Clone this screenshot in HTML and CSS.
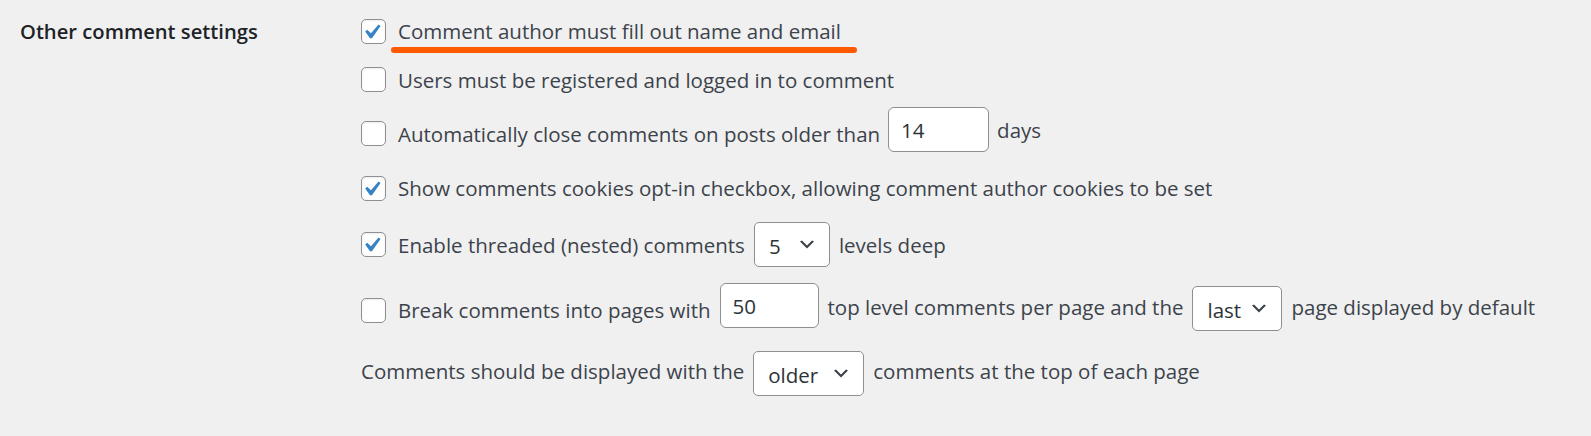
FILE: index.html
```html
<!DOCTYPE html>
<html lang="en">
<head>
<meta charset="utf-8">
<title>Discussion Settings</title>
<link rel="stylesheet" href="styles.css">
</head>
<body>
<div class="form-table">
  <div class="th">Other comment settings</div>
  <fieldset class="options">
    <div class="row r1">
      <label class="opt"><span class="cb"><svg viewBox="3.6 1.8 15.6 15.6"><path d="M14.83 4.89l1.34.94-5.81 8.38H9.02L5.78 9.67l1.34-1.25 2.57 2.4z"/></svg></span><span class="txt mark">Comment author must fill out name and email</span></label>
    </div>
    <div class="row r2">
      <label class="opt"><span class="cb"></span><span class="txt">Users must be registered and logged in to comment</span></label>
    </div>
    <div class="row r3">
      <label class="opt"><span class="cb"></span><span class="txt">Automatically close comments on posts older than</span></label>
      <span class="input w14">14</span>
      <span class="txt">days</span>
    </div>
    <div class="row r4">
      <label class="opt"><span class="cb"><svg viewBox="3.6 1.8 15.6 15.6"><path d="M14.83 4.89l1.34.94-5.81 8.38H9.02L5.78 9.67l1.34-1.25 2.57 2.4z"/></svg></span><span class="txt">Show comments cookies opt-in checkbox, allowing comment author cookies to be set</span></label>
    </div>
    <div class="row r5">
      <label class="opt"><span class="cb"><svg viewBox="3.6 1.8 15.6 15.6"><path d="M14.83 4.89l1.34.94-5.81 8.38H9.02L5.78 9.67l1.34-1.25 2.57 2.4z"/></svg></span><span class="txt">Enable threaded (nested) comments</span></label>
      <span class="select s5"><span>5</span><svg viewBox="3 5.6 14 8.8"><path d="M5 6l5 5 5-5 2 1-7 7-7-7 2-1z"/></svg></span>
      <span class="txt">levels deep</span>
    </div>
    <div class="row r6">
      <label class="opt"><span class="cb"></span><span class="txt">Break comments into pages with</span></label>
      <span class="input w50">50</span>
      <span class="txt">top level comments per page and the</span>
      <span class="select slast"><span>last</span><svg viewBox="3 5.6 14 8.8"><path d="M5 6l5 5 5-5 2 1-7 7-7-7 2-1z"/></svg></span>
      <span class="txt">page displayed by default</span>
    </div>
    <div class="row r7">
      <span class="txt">Comments should be displayed with the</span>
      <span class="select solder"><span>older</span><svg viewBox="3 5.6 14 8.8"><path d="M5 6l5 5 5-5 2 1-7 7-7-7 2-1z"/></svg></span>
      <span class="txt">comments at the top of each page</span>
    </div>
  </fieldset>
</div>
</body>
</html>
```

FILE: styles.css
```css
* { box-sizing: border-box; }
html, body { margin: 0; }
body {
  background: #f0f0f1;
  font-family: "Open Sans", "Noto Sans", sans-serif;
  font-size: 20.5px;
  color: #3c434a;
  width: 1591px;
  height: 436px;
  overflow: hidden;
}
.form-table {
  display: flex;
  padding: 17px 0 0 20px;
}
.th {
  width: 341px;
  flex: none;
  font-size: 20.2px;
  line-height: 28px;
  font-weight: 600;
  color: #1d2327;
}
.options {
  border: 0;
  margin: 0;
  padding: 0;
  min-width: 0;
  display: flex;
  flex-direction: column;
}
.row {
  display: flex;
  align-items: center;
  white-space: nowrap;
}
.r1, .r2, .r4 { height: 28px; }
.r3, .r5, .r7 { height: 45px; }
.r6 { height: 48px; align-items: flex-start; }
.r2 { margin-top: 20.5px; }
.r3 { margin-top: 13.5px; }
.r4 { margin-top: 22px; }
.r5 { margin-top: 20px; }
.r6 { margin-top: 16px; }
.r7 { margin-top: 20px; }

.opt {
  display: flex;
  align-items: center;
  gap: 12px;
}
.txt { line-height: 28px; }
.r3 .opt { margin-top: 8px; }
.r6 .opt { align-self: center; margin-top: 6px; }
.r6 > .txt { align-self: center; }
.r7 > .txt { margin-top: -5px; }

.cb {
  width: 25px;
  height: 25px;
  flex: none;
  background: #fff;
  border: 1px solid #8c8f94;
  border-radius: 5px;
  box-shadow: inset 0 1px 2px rgba(0,0,0,.08);
  display: flex;
}
.cb svg {
  width: 23px;
  height: 23px;
  fill: #3582c4;
  overflow: visible;
}

.input, .select {
  height: 45px;
  flex: none;
  background: #fff;
  border: 1px solid #8c8f94;
  color: #2c3338;
  line-height: 28px;
  display: flex;
  align-items: center;
  margin: 0 9px;
}
.input {
  border-radius: 6px;
  padding-left: 12px;
}
.w14 { width: 101px; margin-left: 8px; margin-right: 8px; }
.w50 { width: 99px; }
.select {
  border-radius: 5px;
  padding: 0 15px 0 14px;
  justify-content: space-between;
}
.select span { padding-top: 2px; }
.select svg {
  width: 14px;
  height: 9px;
  fill: #3c434a;
}
.s5 { width: 76px; }
.slast { width: 90px; margin-top: 3px; }
.solder { width: 111px; }

.mark { position: relative; }
.mark::after {
  content: "";
  position: absolute;
  left: -7px;
  right: -16px;
  top: 30px;
  height: 6px;
  border-radius: 3px;
  background: #ff5a00;
}
```
